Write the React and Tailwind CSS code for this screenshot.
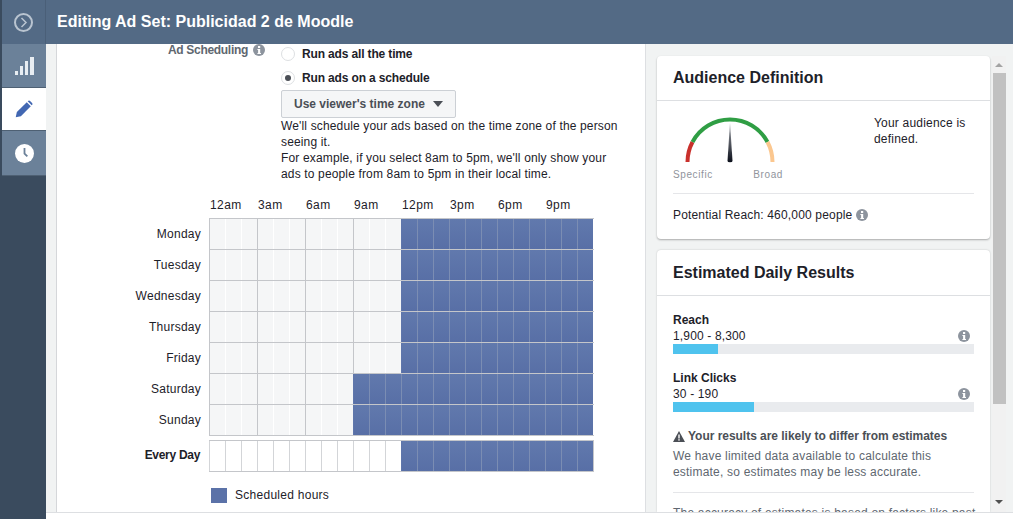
import React from 'react';

const hours = Array.from({ length: 24 }, (_, i) => i);
const days = [
    { name: 'Monday', start: 12 },
    { name: 'Tuesday', start: 12 },
    { name: 'Wednesday', start: 12 },
    { name: 'Thursday', start: 12 },
    { name: 'Friday', start: 12 },
    { name: 'Saturday', start: 9 },
    { name: 'Sunday', start: 9 },
];
const timeLabels = ['12am', '3am', '6am', '9am', '12pm', '3pm', '6pm', '9pm'];

function InfoIcon({ className }) {
    return (
        <svg viewBox="0 0 12 12" className={className}>
            <circle cx="6" cy="6" r="6" fill="#8d949e" />
            <rect x="5" y="2" width="2.2" height="2" fill="#fff" />
            <path d="M4.4 5h2.8v4h0.8v1H4.4V9h0.7V6h-0.7z" fill="#fff" />
        </svg>
    );
}

function DayCell({ hour, start }) {
    const on = hour >= start;
    const major = hour % 3 === 0;
    let line = 'border-l-white';
    if (on) line = hour === start ? 'border-l-[#5f76ab]' : 'border-l-[#7b8db3]';
    else if (major) line = 'border-l-[#c4c6ca]';
    return (
        <div
            className={`h-[30px] border-l ${line} ${on ? 'bg-linear-to-b from-[#6179ad] to-[#586fa6]' : 'bg-[#f5f6f7]'}`}
        />
    );
}

function EveryDayCell({ hour }) {
    const on = hour >= 12;
    let line = 'border-l-[#d3d5d8]';
    if (on) line = hour === 12 ? 'border-l-[#5f76ab]' : 'border-l-[#7b8db3]';
    return (
        <div
            className={`h-[30px] border-l ${line} ${on ? 'bg-linear-to-b from-[#6179ad] to-[#586fa6]' : 'bg-white'}`}
        />
    );
}

function Gauge() {
    return (
        <svg width="100" height="48" viewBox="0 0 100 48" className="block">
            <defs>
                <linearGradient id="needle" x1="0" y1="0" x2="0" y2="1">
                    <stop offset="0" stopColor="#a0a4aa" />
                    <stop offset="1" stopColor="#0b0f1a" />
                </linearGradient>
            </defs>
            <path d="M7.5 46 A42.5 42.5 0 0 1 12.5 26" fill="none" stroke="#c9302c" strokeWidth="4" />
            <path d="M12.5 26 A42.5 42.5 0 0 1 87.5 26" fill="none" stroke="#2f9e44" strokeWidth="4" />
            <path d="M87.5 26 A42.5 42.5 0 0 1 92.5 46" fill="none" stroke="#fbc78f" strokeWidth="4" />
            <path d="M50 7 L52.5 45 A2.5 1.2 0 0 1 47.5 45 Z" fill="url(#needle)" />
        </svg>
    );
}

function ResultBar({ label, range, width }) {
    return (
        <div className="mb-[16px]">
            <div className="font-bold text-[#1d2129] leading-[16px]">{label}</div>
            <div className="flex items-center justify-between pr-[4px] leading-[16px]">
                <span className="tracking-[0.15px]">{range}</span>
                <InfoIcon className="w-3 h-3" />
            </div>
            <div className="h-[10px] bg-[#e9ebee]">
                <div className={`h-full bg-[#4fc3ee] ${width}`} />
            </div>
        </div>
    );
}

export default function App() {
    return (
        <div className="flex h-[519px] w-[1013px] overflow-hidden bg-white text-xs text-[#1d2129] font-['Liberation_Sans',Arial,sans-serif]">
            {/* Left Rail */}
            <div className="w-[46px] shrink-0 flex flex-col bg-[#3a4b5e] pl-[2px]">
                <div className="h-[44px] flex items-center justify-center bg-[#536a85] border-r border-[#4a5f78]">
                    <span className="w-[19px] h-[19px] rounded-full border-2 border-[#b9c4d0] flex items-center justify-center">
                        <svg width="9" height="11" viewBox="0 0 9 11" fill="none" stroke="#b9c4d0" strokeWidth="1.5">
                            <path d="M2.5 1 L7 5.5 L2.5 10" />
                        </svg>
                    </span>
                </div>
                <div className="h-[44px] flex items-center justify-center bg-[#6b8199] border-b border-[#4e6073]">
                    <div className="flex items-end gap-[2px] h-[18px]">
                        <span className="w-[3px] h-[4px] bg-[#e8edf2]" />
                        <span className="w-[3px] h-[9px] bg-[#e8edf2]" />
                        <span className="w-[3px] h-[14px] bg-[#e8edf2]" />
                        <span className="w-[4px] h-[18px] bg-[#e8edf2]" />
                    </div>
                </div>
                <div className="h-[43px] flex items-center justify-center bg-white border-b border-[#4e6073]">
                    <svg width="22" height="22" viewBox="0 0 24 24" fill="#4267b2">
                        <path d="M3 21l1.2-5.6L15 4.6l4.4 4.4L8.6 19.8z" />
                        <path d="M16.4 3.2a1.6 1.6 0 0 1 2.2 0l2.2 2.2a1.6 1.6 0 0 1 0 2.2l-.4.4-4.4-4.4z" />
                    </svg>
                </div>
                <div className="h-[45px] pt-[1px] flex items-center justify-center bg-[#6b8199] border-b border-[#4e6073]">
                    <svg width="19" height="19" viewBox="0 0 19 19">
                        <circle cx="9.5" cy="9.5" r="9.5" fill="#ffffff" />
                        <path d="M8.6 4h1.8v5.2l2.6 2.6-1.3 1.3-3.1-3.1z" fill="#6b8199" />
                    </svg>
                </div>
            </div>

            <div className="flex-1 flex flex-col min-w-0">
                {/* Header */}
                <div className="h-[44px] shrink-0 flex items-center pl-[11px] bg-[#536a85] text-white text-base font-bold">
                    Editing Ad Set: Publicidad 2 de Moodle
                </div>

                <div className="flex h-[469px] shrink-0 overflow-hidden bg-[#f1f3f3] border-b border-[#dddfe2]">
                    {/* Editor column */}
                    <div className="w-[599px] shrink-0 pl-[10px]">
                        <div className="h-full bg-white border-l border-[#d5d7da]">
                            <div className="flex">
                                <div className="w-[208px] shrink-0 flex justify-end gap-[5px] text-[#606770] font-bold">
                                    <span className="leading-[12px] tracking-[-0.3px]">Ad Scheduling</span>
                                    <InfoIcon className="w-3 h-3" />
                                </div>
                                <div className="flex-1 pl-[16px]">
                                    <div className="flex items-center gap-[7px] h-[20px] font-bold tracking-[-0.15px]">
                                        <span className="w-[14px] h-[14px] rounded-full border border-[#dddfe2]" />
                                        Run ads all the time
                                    </div>
                                    <div className="flex items-center gap-[7px] h-[24px] mt-[2px] font-bold tracking-[-0.15px]">
                                        <span className="w-[14px] h-[14px] rounded-full border border-[#dddfe2] flex items-center justify-center">
                                            <span className="w-[6px] h-[6px] rounded-full bg-[#4b4f56]" />
                                        </span>
                                        Run ads on a schedule
                                    </div>
                                    <div className="inline-flex items-center gap-[8px] h-[28px] px-[12px] bg-[#f5f6f7] border border-[#ccd0d5] rounded-[2px] text-[#4b4f56] font-bold align-top">
                                        Use viewer's time zone
                                        <span className="w-0 h-0 border-x-[5px] border-x-transparent border-t-[6px] border-t-[#4b4f56]" />
                                    </div>
                                    <p className="w-[345px] leading-[16px] tracking-[0.15px]">
                                        We'll schedule your ads based on the time zone of the person seeing it.
                                        <br />
                                        For example, if you select 8am to 5pm, we'll only show your ads to people from 8am to 5pm in their local time.
                                    </p>
                                </div>
                            </div>

                            {/* Schedule grid */}
                            <div className="mt-[15px] ml-[152px] w-[385px]">
                                <div className="grid grid-cols-8 h-[16px] mb-[5px] pl-[1px] leading-[16px] tracking-[0.4px]">
                                    {timeLabels.map((t) => (
                                        <span key={t}>{t}</span>
                                    ))}
                                </div>
                                <div className="relative border-l border-b border-[#c4c6ca]">
                                    {days.map((d) => (
                                        <div key={d.name} className="relative border-t border-[#c4c6ca]">
                                            <span className="absolute right-[393px] top-0 leading-[30px] whitespace-nowrap tracking-[0.25px] text-[#1d2129]">
                                                {d.name}
                                            </span>
                                            <div className="grid grid-cols-[repeat(24,16px)] -ml-px">
                                                {hours.map((h) => (
                                                    <DayCell key={h} hour={h} start={d.start} />
                                                ))}
                                            </div>
                                        </div>
                                    ))}
                                </div>
                                <div className="relative mt-[4px] border border-[#c4c6ca] w-[385px]">
                                    <span className="absolute right-[393px] top-0 leading-[28px] whitespace-nowrap font-bold tracking-[-0.3px]">
                                        Every Day
                                    </span>
                                    <div className="grid grid-cols-[repeat(24,16px)] -ml-px">
                                        {hours.map((h) => (
                                            <EveryDayCell key={h} hour={h} />
                                        ))}
                                    </div>
                                </div>
                                <div className="flex items-center gap-[8px] mt-[15px] ml-[2px] tracking-[0.27px] text-[#1d2129]">
                                    <span className="w-[16px] h-[15px] bg-[#5b72a8]" />
                                    Scheduled hours
                                </div>
                            </div>
                        </div>
                    </div>

                    {/* Right column */}
                    <div className="flex-1 border-l border-[#dddfe2] pl-[11px] pt-[12px] flex">
                        <div className="w-[333px] shrink-0 flex flex-col gap-[11px]">
                            {/* Audience Definition */}
                            <div className="h-[183px] shrink-0 bg-white rounded-[4px] shadow-[0_1px_2px_rgba(0,0,0,0.3)]">
                                <div className="h-[45px] flex items-center px-[16px] border-b border-[#dddfe2] text-base font-bold">
                                    Audience Definition
                                </div>
                                <div className="px-[16px]">
                                    <div className="h-[93px] flex border-b border-[#e5e6e9] pt-[15px]">
                                        <div className="w-[201px] shrink-0">
                                            <div className="ml-[7px]">
                                                <Gauge />
                                            </div>
                                            <div className="flex justify-between w-[110px] mt-[5px] text-[10px] leading-[11px] tracking-[0.6px] text-[#90949c]">
                                                <span>Specific</span>
                                                <span>Broad</span>
                                            </div>
                                        </div>
                                        <p className="leading-[16px] tracking-[0.2px] -mt-[1px]">
                                            Your audience is
                                            <br />
                                            defined.
                                        </p>
                                    </div>
                                    <div className="flex items-center gap-[4px] h-[42px] tracking-[0.17px]">
                                        Potential Reach: 460,000 people
                                        <InfoIcon className="w-3 h-3" />
                                    </div>
                                </div>
                            </div>

                            {/* Estimated Daily Results */}
                            <div className="flex-1 bg-white rounded-t-[4px] shadow-[0_0_2px_rgba(0,0,0,0.2)] overflow-hidden">
                                <div className="h-[46px] flex items-center px-[16px] border-b border-[#dddfe2] text-base font-bold">
                                    Estimated Daily Results
                                </div>
                                <div className="px-[16px] pt-[16px]">
                                    <ResultBar label="Reach" range="1,900 - 8,300" width="w-[45px]" />
                                    <ResultBar label="Link Clicks" range="30 - 190" width="w-[81px]" />
                                    <div className="flex items-center gap-[3px] mt-[16px] h-[16px] font-bold text-[#4b4f56] tracking-[-0.03px]">
                                        <svg width="12" height="11" viewBox="0 0 12 11">
                                            <path d="M6 0 L12 11 H0 Z" fill="#4b4f56" />
                                            <rect x="5.3" y="3.5" width="1.4" height="4" fill="#fff" />
                                            <rect x="5.3" y="8.2" width="1.4" height="1.4" fill="#fff" />
                                        </svg>
                                        Your results are likely to differ from estimates
                                    </div>
                                    <p className="mt-[4px] pb-[12px] leading-[16px] tracking-[0.2px] text-[#606770] border-b border-[#e5e6e9]">
                                        We have limited data available to calculate this estimate, so estimates may be less accurate.
                                    </p>
                                    <p className="mt-[12px] leading-[16px] tracking-[0.2px] text-[#606770] whitespace-nowrap">
                                        The accuracy of estimates is based on factors like past
                                    </p>
                                </div>
                            </div>
                        </div>

                        {/* Scrollbar */}
                        <div className="w-[14px] ml-[2px] bg-[#f1f1f1] flex flex-col items-center">
                            <div className="h-[17px] shrink-0 flex items-center justify-center">
                                <span className="w-0 h-0 border-x-[4px] border-x-transparent border-b-[4px] border-b-[#a3a3a3]" />
                            </div>
                            <div className="w-[13px] h-[331px] shrink-0 bg-[#c1c1c1]" />
                            <div className="flex-1" />
                            <div className="h-[17px] mb-[2px] shrink-0 flex items-center justify-center">
                                <span className="w-0 h-0 border-x-[4px] border-x-transparent border-t-[4px] border-t-[#505050]" />
                            </div>
                        </div>
                    </div>
                </div>
            </div>
        </div>
    );
}
